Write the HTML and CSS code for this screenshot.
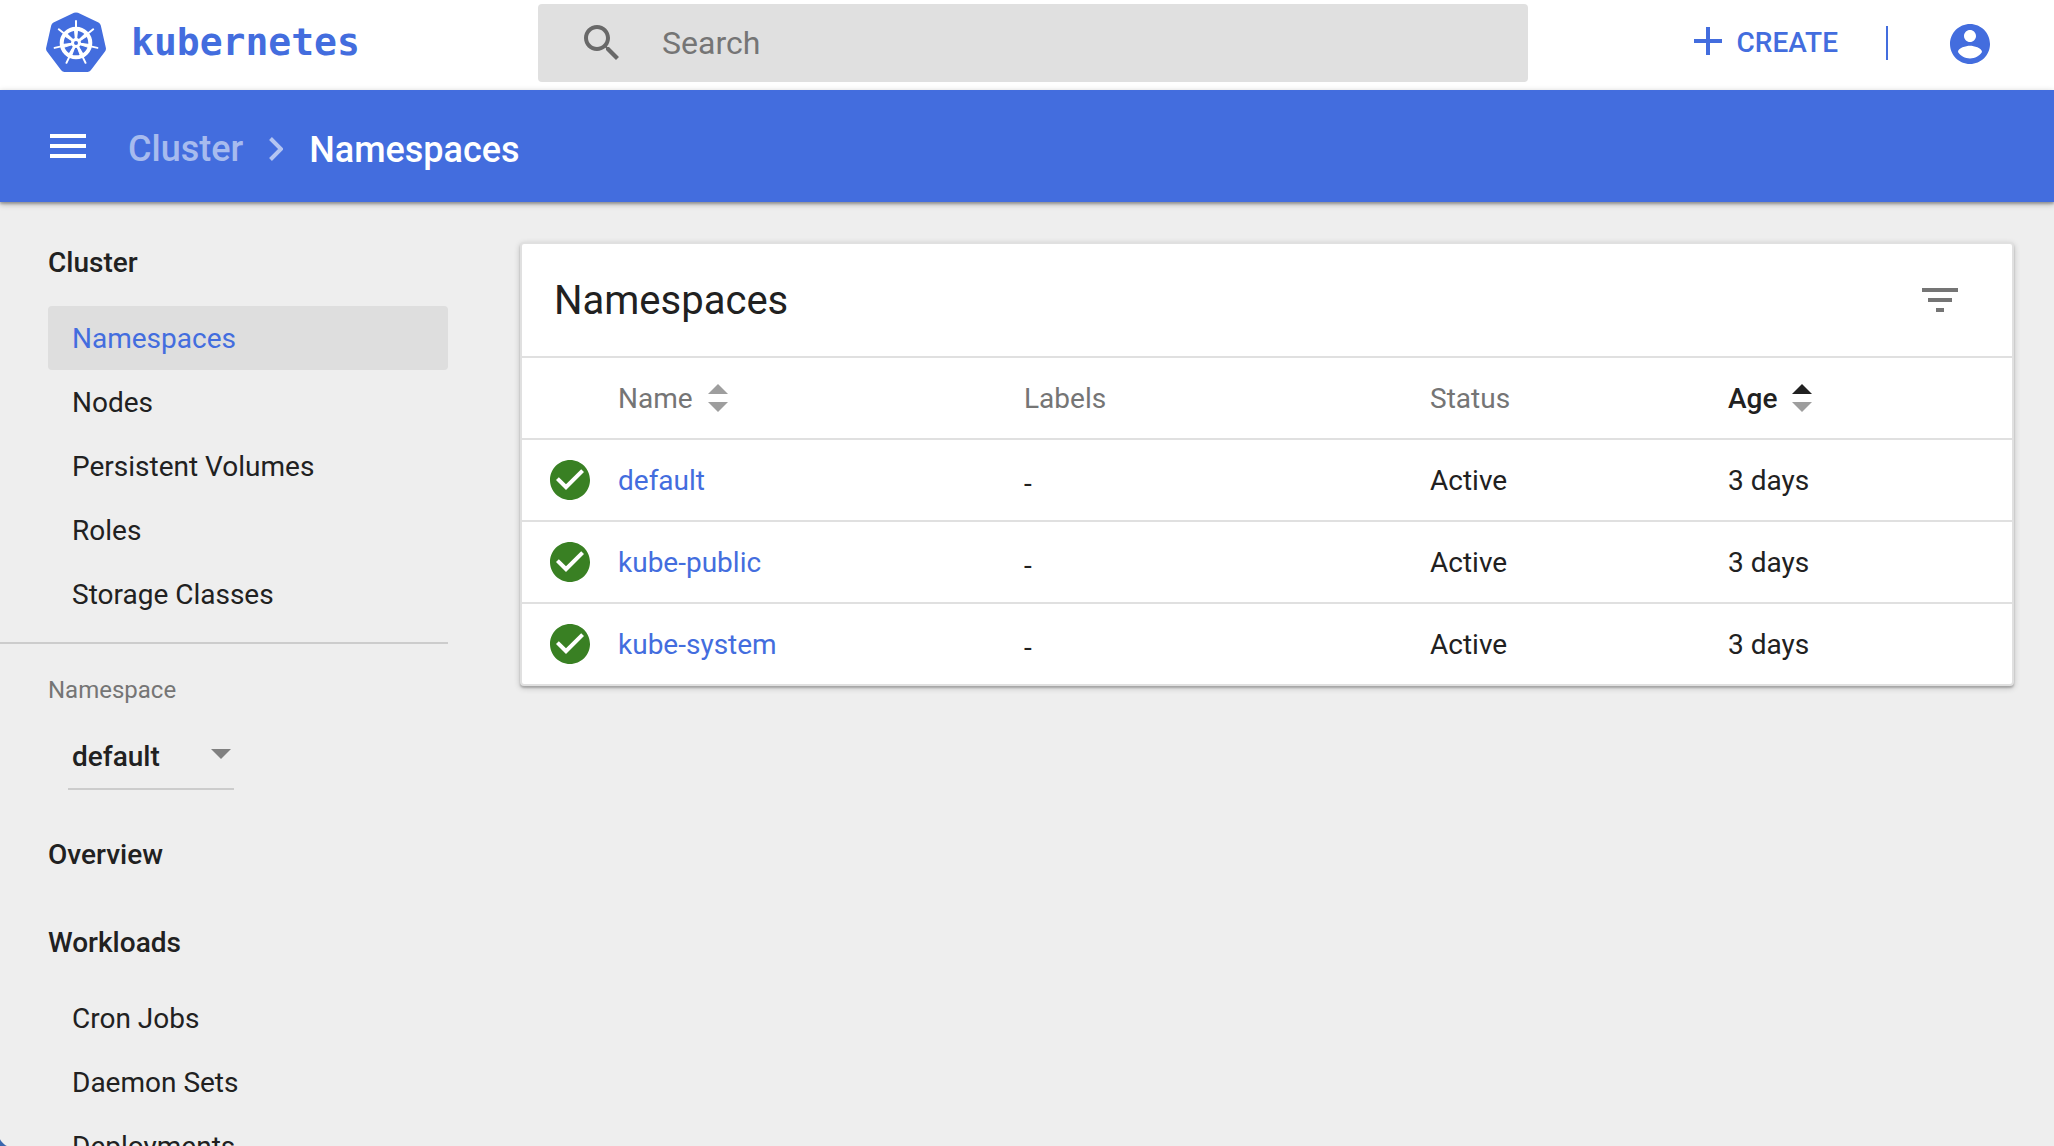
FILE: index.html
```
<!DOCTYPE html>
<html lang="en">
<head>
<meta charset="utf-8">
<meta name="viewport" content="width=device-width, initial-scale=1">
<title>Namespaces - Kubernetes Dashboard</title>
<link rel="stylesheet" href="styles.css">
</head>
<body>
<svg class="sprite" aria-hidden="true">
  <symbol id="check" viewBox="0 0 24 24"><path d="M12 2C6.480 2 2 6.480 2 12s4.480 10 10 10 10-4.480 10-10S17.520 2 12 2zm-2 15l-5-5 1.410-1.410L10 14.170l7.590-7.590L19 8l-9 9z"/></symbol>
</svg>
<header class="topbar">
  <a class="brand" href="#">
    <svg class="brand-logo" viewBox="0 0 60 60" aria-hidden="true">
      <path class="brand-shape" d="M28 .8Q30 0 32 .8L52.500 10.500Q54.300 11.500 54.800 13.500L59.900 36Q60.200 38 59 39.500L44.800 58.300Q43.500 60 41.500 60H18.500Q16.500 60 15.200 58.300L1 39.500Q-.2 38 .1 36L5.200 13.500Q5.700 11.500 7.500 10.500Z"/>
      <g class="brand-wheel">
        <circle cx="30" cy="31" r="14.300"/>
        <g id="spoke"><path d="M30 27V9"/><path class="brand-spoke" d="M29.500 29L28.500 18h3L30.500 29z"/></g>
        <use href="#spoke" transform="rotate(51.430 30 31)"/>
        <use href="#spoke" transform="rotate(102.860 30 31)"/>
        <use href="#spoke" transform="rotate(154.290 30 31)"/>
        <use href="#spoke" transform="rotate(205.710 30 31)"/>
        <use href="#spoke" transform="rotate(257.140 30 31)"/>
        <use href="#spoke" transform="rotate(308.570 30 31)"/>
        <circle class="brand-hub" cx="30" cy="31" r="3.500"/>
      </g>
    </svg>
    <span class="brand-name">kubernetes</span>
  </a>
  <form class="search" role="search">
    <svg class="icon" viewBox="0 0 24 24" aria-hidden="true"><path d="M15.500 14h-.79l-.28-.27C15.410 12.590 16 11.110 16 9.500 16 5.910 13.090 3 9.500 3S3 5.910 3 9.500 5.910 16 9.500 16c1.610 0 3.090-.59 4.230-1.570l.27.28v.79l5 4.990L20.490 19l-4.990-5zm-6 0C7.010 14 5 11.990 5 9.500S7.010 5 9.500 5 14 7.010 14 9.500 11.990 14 9.500 14z"/></svg>
    <input class="search-input" type="search" placeholder="Search" aria-label="Search">
  </form>
  <div class="actions">
    <button class="create" type="button">
      <svg class="icon" viewBox="0 0 24 24" aria-hidden="true"><path d="M19 13h-6v6h-2v-6H5v-2h6V5h2v6h6v2z"/></svg>CREATE
    </button>
    <span class="actions-divider"></span>
    <button class="user" type="button" aria-label="User menu">
      <svg class="icon" viewBox="0 0 24 24" aria-hidden="true"><path d="M12 2C6.480 2 2 6.480 2 12s4.480 10 10 10 10-4.480 10-10S17.520 2 12 2zm0 3c1.660 0 3 1.340 3 3s-1.340 3-3 3-3-1.340-3-3 1.340-3 3-3zm0 14.200c-2.500 0-4.710-1.280-6-3.220.03-1.990 4-3.080 6-3.080 1.990 0 5.970 1.090 6 3.080-1.290 1.940-3.500 3.220-6 3.220z"/></svg>
    </button>
  </div>
</header>
<div class="toolbar">
  <button class="menu" type="button" aria-label="Toggle navigation">
    <svg class="icon" viewBox="0 0 24 24" aria-hidden="true"><path d="M3 18h18v-2H3v2zm0-5h18v-2H3v2zm0-7v2h18V6H3z"/></svg>
  </button>
  <nav class="crumbs" aria-label="Breadcrumb">
    <a class="crumb-link" href="#">Cluster</a>
    <svg class="crumb-arrow" viewBox="0 0 14 24" aria-hidden="true"><path d="M1.500 1.500L12 12L1.500 22.500"/></svg>
    <span class="crumb-current">Namespaces</span>
  </nav>
</div>
<div class="layout">
  <nav class="sidebar" aria-label="Resources">
    <section class="group">
      <a class="nav-title" href="#">Cluster</a>
      <a class="nav-item active" href="#">Namespaces</a>
      <a class="nav-item" href="#">Nodes</a>
      <a class="nav-item" href="#">Persistent Volumes</a>
      <a class="nav-item" href="#">Roles</a>
      <a class="nav-item" href="#">Storage Classes</a>
    </section>
    <section class="namespace">
      <label class="namespace-label" for="ns">Namespace</label>
      <div class="select">
        <select id="ns"><option>default</option></select>
        <svg class="select-arrow" viewBox="0 0 20 10" aria-hidden="true"><path d="M0 0h20L10 10z"/></svg>
      </div>
    </section>
    <section class="group">
      <a class="nav-title" href="#">Overview</a>
      <a class="nav-title" href="#">Workloads</a>
      <a class="nav-item" href="#">Cron Jobs</a>
      <a class="nav-item" href="#">Daemon Sets</a>
      <a class="nav-item" href="#">Deployments</a>
    </section>
  </nav>
  <main class="content">
    <section class="card">
      <header class="card-head">
        <h1 class="card-title">Namespaces</h1>
        <button class="filter" type="button" aria-label="Filter">
          <svg class="icon" viewBox="0 0 24 24" aria-hidden="true"><path d="M10 18h4v-2h-4v2zM3 6v2h18V6H3zm3 7h12v-2H6v2z"/></svg>
        </button>
      </header>
      <table class="table">
        <colgroup><col class="col-icon"><col class="col-wide"><col class="col-wide"><col class="col-status"><col></colgroup>
        <thead>
          <tr>
            <th></th>
            <th><button class="sort" type="button">Name<svg class="sort-icon" viewBox="0 0 20 28" aria-hidden="true"><path d="M0 10L10 0L20 10z"/><path d="M0 18h20L10 28z"/></svg></button></th>
            <th>Labels</th>
            <th>Status</th>
            <th><button class="sort sorted" type="button">Age<svg class="sort-icon" viewBox="0 0 20 28" aria-hidden="true"><path class="sort-on" d="M0 10L10 0L20 10z"/><path d="M0 18h20L10 28z"/></svg></button></th>
          </tr>
        </thead>
        <tbody>
          <tr>
            <td class="state"><svg class="status" role="img" aria-label="Ready"><use href="#check"/></svg></td>
            <td><a class="link" href="#">default</a></td>
            <td class="labels">-</td>
            <td>Active</td>
            <td>3 days</td>
          </tr>
          <tr>
            <td class="state"><svg class="status" role="img" aria-label="Ready"><use href="#check"/></svg></td>
            <td><a class="link" href="#">kube-public</a></td>
            <td class="labels">-</td>
            <td>Active</td>
            <td>3 days</td>
          </tr>
          <tr>
            <td class="state"><svg class="status" role="img" aria-label="Ready"><use href="#check"/></svg></td>
            <td><a class="link" href="#">kube-system</a></td>
            <td class="labels">-</td>
            <td>Active</td>
            <td>3 days</td>
          </tr>
        </tbody>
      </table>
    </section>
  </main>
</div>
</body>
</html>
```
FILE: styles.css
```
:root {
  --blue: #436dde;
  --text: #212121;
  --muted: #757575;
  --line: #e0e0e0;
}

* { box-sizing: border-box; }

body {
  margin: 0;
  height: 100vh;
  display: flex;
  flex-direction: column;
  overflow: hidden;
  background: #eee;
  color: var(--text);
  font: 400 28px/40px Roboto, "Liberation Sans", sans-serif;
}

/* Rounded window corner */
body::after {
  content: "";
  position: fixed;
  left: 0;
  bottom: 0;
  width: 16px;
  height: 16px;
  background: radial-gradient(circle at 100% 0, transparent 18px, #3a66ad 19px);
}

a { color: inherit; text-decoration: none; }

button {
  padding: 0;
  border: 0;
  background: none;
  color: inherit;
  font: inherit;
  cursor: pointer;
}

.sprite { display: none; }

.icon {
  display: block;
  flex: none;
  width: 48px;
  height: 48px;
  fill: currentColor;
}

/* Top bar */
.topbar {
  flex: none;
  display: flex;
  height: 90px;
  padding: 4px 60px 8px 46px;
  background: #fff;
}

.brand {
  flex: none;
  display: flex;
  align-items: center;
  gap: 25px;
  width: 492px;
  padding-bottom: 2px;
  color: var(--blue);
}

.brand-logo { width: 60px; height: 60px; }
.brand-shape { fill: var(--blue); }
.brand-wheel { fill: none; stroke: #fff; stroke-width: 2; stroke-linecap: round; }
.brand-wheel > circle { stroke-width: 4; }
.brand-wheel > .brand-hub { fill: var(--blue); stroke-width: 3; }
.brand-spoke { fill: #fff; stroke-width: 1; }

.brand-name { font: 700 38px/48px "DejaVu Sans Mono", monospace; }

.search {
  flex: 1;
  display: flex;
  align-items: center;
  gap: 36px;
  padding: 0 40px;
  border-radius: 4px;
  background: #e0e0e0;
  color: #696969;
}

.search-input {
  flex: 1;
  min-width: 0;
  padding: 0;
  border: 0;
  outline: 0;
  background: none;
  color: var(--text);
  font: 400 32px/40px Roboto, "Liberation Sans", sans-serif;
}

.search-input::placeholder { color: var(--muted); opacity: 1; }

.actions {
  flex: none;
  display: flex;
  justify-content: flex-end;
  align-items: center;
  width: 466px;
  color: var(--blue);
}

.create {
  display: flex;
  align-items: center;
  gap: 5px;
  font-weight: 500;
}

.create .icon { margin-bottom: 5px; }

.actions-divider {
  width: 2px;
  height: 34px;
  margin: 0 58px 0 48px;
  background: var(--blue);
}

.user { padding-top: 2px; }

/* Toolbar */
.toolbar {
  position: relative;
  flex: none;
  display: flex;
  align-items: center;
  gap: 36px;
  height: 112px;
  padding: 0 44px;
  background: var(--blue);
  box-shadow: 0 2px 6px rgba(0, 0, 0, .3), 0 2px 2px rgba(0, 0, 0, .2);
  color: #fff;
}

.crumbs {
  display: flex;
  align-items: center;
  gap: 26px;
  padding-top: 6px;
  font-size: 36px;
  font-weight: 500;
}

.crumb-link { color: #a7bbee; }
.crumb-current { padding-top: 2px; }

.crumb-arrow {
  width: 14px;
  height: 24px;
  fill: none;
  stroke: #b4c5f2;
  stroke-width: 4;
}

/* Sidebar */
.layout {
  flex: 1;
  display: flex;
  min-height: 0;
}

.sidebar {
  flex: none;
  width: 448px;
  padding-top: 16px;
  overflow-y: auto;
  scrollbar-width: none;
}

.group { padding-left: 48px; }

.nav-title,
.nav-item { display: block; }

.nav-title { padding: 25px 0 23px; font-weight: 500; }

.nav-item { padding: 13px 24px 11px; border-radius: 4px; }
.nav-item.active { background: #dedede; color: var(--blue); }

.namespace {
  margin-top: 16px;
  padding: 26px 48px 20px;
  border-top: 2px solid #ccc;
}

.namespace-label {
  display: block;
  font-size: 24px;
  color: var(--muted);
}

.select {
  display: grid;
  align-items: center;
  width: 166px;
  margin: 18px 0 0 20px;
  border-bottom: 2px solid #ccc;
}

.select select {
  grid-area: 1 / 1;
  height: 60px;
  padding: 0 4px 2px;
  border: 0;
  appearance: none;
  background: none;
  color: var(--text);
  font: inherit;
  font-weight: 500;
}

.select-arrow {
  grid-area: 1 / 1;
  justify-self: end;
  width: 20px;
  height: 10px;
  margin: 0 3px 8px 0;
  fill: #808080;
  pointer-events: none;
}

/* Card */
.content {
  flex: 1;
  min-width: 0;
  padding: 40px 40px 40px 72px;
}

.card {
  overflow: hidden;
  border: 2px solid var(--line);
  border-radius: 4px;
  background: #fff;
  box-shadow: 0 2px 6px rgba(0, 0, 0, .2), 0 2px 2px rgba(0, 0, 0, .2);
}

.card-head {
  display: flex;
  align-items: center;
  justify-content: space-between;
  height: 112px;
  padding: 0 48px 0 32px;
}

.card-title { margin: 0; padding-top: 2px; font-size: 40px; font-weight: 400; }
.filter { color: var(--muted); }

.table {
  width: 100%;
  table-layout: fixed;
  border-spacing: 0;
  text-align: left;
}

.col-icon { width: 96px; }
.col-wide { width: 27.25%; }
.col-status { width: 20%; }

.table th,
.table td {
  height: 82px;
  padding: 2px 0 0;
  border-top: 2px solid var(--line);
}

.table th { color: var(--muted); font-weight: 400; }

.table .state { padding-top: 0; }
.table .labels { padding-top: 8px; }

.sort {
  display: flex;
  align-items: center;
  gap: 15px;
}

.sorted { color: var(--text); font-weight: 500; }

.sort-icon { width: 20px; height: 28px; margin-bottom: 2px; fill: #9e9e9e; }
.sort-on { fill: var(--text); }

.status {
  display: block;
  width: 48px;
  height: 48px;
  margin-left: 24px;
  fill: #398023;
}

.link { color: var(--blue); }
```
